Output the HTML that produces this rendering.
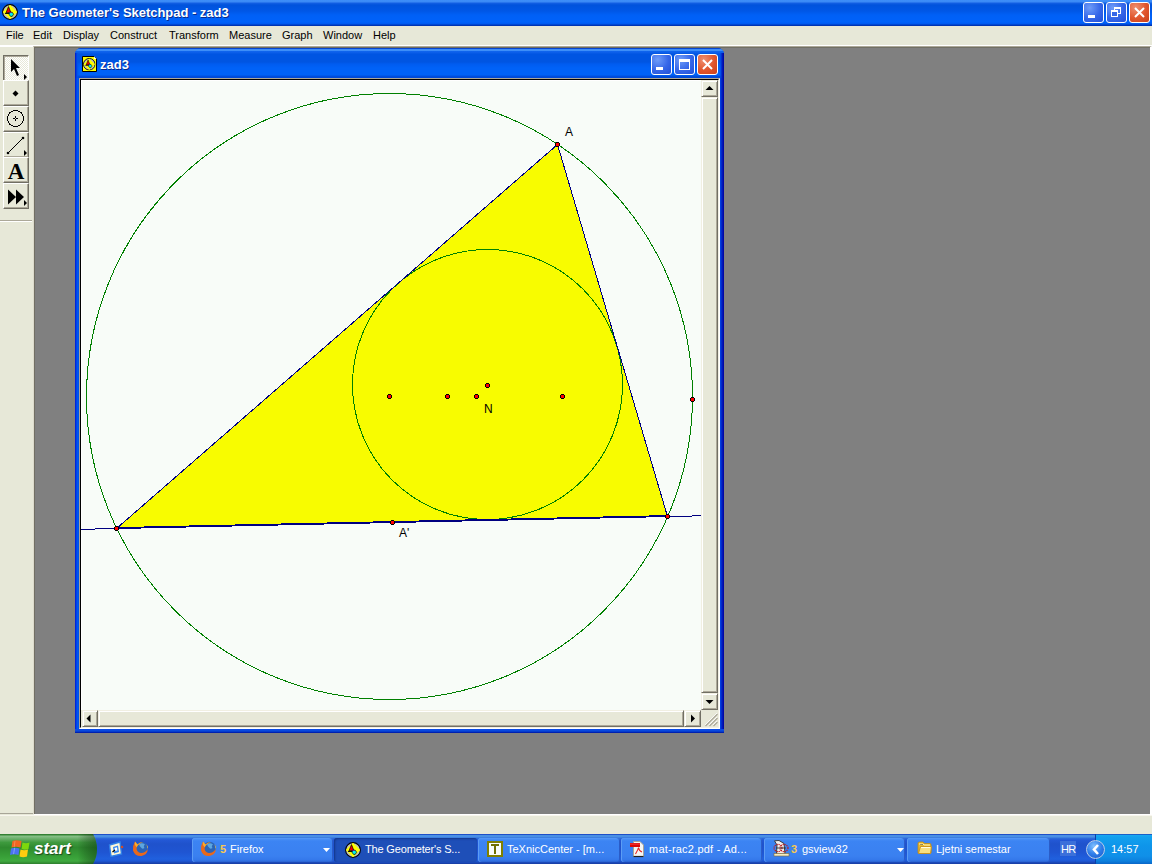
<!DOCTYPE html>
<html><head><meta charset="utf-8">
<style>
*{margin:0;padding:0;box-sizing:border-box}
html,body{width:1152px;height:864px;overflow:hidden;background:#E7E8D8;font-family:"Liberation Sans",sans-serif}
.a{position:absolute}
#title{left:0;top:0;width:1152px;height:26px;background:linear-gradient(#3D8FF8 0px,#3A8AF5 2px,#1460E4 3px,#0053DC 5px,#0057E6 11px,#0060F6 15px,#0062FA 22px,#0058EE 24px,#0038B8 25px,#0030B0 26px)}
#title .t{left:22px;top:5px;color:#fff;font-weight:bold;font-size:13px;line-height:16px;letter-spacing:-0.03px;white-space:nowrap;text-shadow:1px 1px 0 #0A2A8A}
.xb{width:21px;height:21px;border:1px solid #fff;border-radius:3px;background:radial-gradient(circle at 30% 25%,#6E9CF8,#3566E8 55%,#2250D8)}
.xc{background:radial-gradient(circle at 30% 25%,#F09070,#E0552C 55%,#C8401A)}
#menu{left:0;top:26px;width:1152px;height:19px;background:#E7E8D8}
#menu span{position:absolute;top:3px;font-size:11px;line-height:13px;color:#000;white-space:nowrap}
#mdi{left:33px;top:46px;width:1119px;height:769px;background:#808080;border-top:1px solid #ACA899;border-left:1px solid #DCDACC;border-right:2px solid #fff;border-bottom:1px solid #fff}
#mdi .in{position:absolute;left:0;top:0;right:0;bottom:0;border-top:1px solid #716F64;border-left:1px solid #716F64}
#status{left:0;top:815px;width:1152px;height:19px;background:#E7E8D8;border-top:1px solid #F8F6EE}
#panel{left:0;top:46px;width:33px;height:768px;background:#E7E8D8;border-top:1px solid #fff;border-bottom:1px solid #A8A598}
.tb{position:absolute;left:3px;width:26px;height:26px;background:#E7E8D8;border-top:1px solid #fff;border-left:1px solid #fff;border-right:1px solid #716F64;border-bottom:1px solid #716F64;box-shadow:inset -1px -1px 0 #ACA899}
.tb.sel{border-top:1px solid #716F64;border-left:1px solid #716F64;border-right:1px solid #fff;border-bottom:1px solid #fff;box-shadow:inset 1px 1px 0 #ACA899;background:repeating-conic-gradient(#FFFFFF 0 25%,#E7E8D8 0 50%) 0 0/2px 2px}
#child{left:75px;top:48px;width:649px;height:685px;background:#0A48E0;border-radius:6px 6px 0 0}
#ctitle{left:0;top:0;width:649px;height:30px;border-radius:6px 6px 0 0;background:linear-gradient(#0845D0 0px,#0845D0 1px,#3D8EF8 1px,#3D8EF8 3px,#1066EE 3px,#0A5CE8 5px,#0055E2 6px,#0055E2 14px,#005CF0 16px,#0062F8 20px,#0062F8 27px,#0050E0 28px,#0046D4 30px)}
#ctitle .t{left:25px;top:9px;color:#fff;font-weight:bold;font-size:13px;line-height:16px;text-shadow:1px 1px 0 #0A2A8A}
#cframe{left:0;top:30px;width:649px;height:655px;border-bottom:4px solid #0A48E0;background:linear-gradient(90deg,#0018D8 0px,#0030E0 1px,#0058F0 2px,#0050E8 4px,transparent 4px,transparent 645px,#0048E8 645px,#0020C0 647px,#0000A0 649px)}
#client{left:79px;top:78px;width:641px;height:651px;border-top:1px solid #ACA899;border-left:1px solid #ACA899;border-right:1px solid #fff;border-bottom:1px solid #fff;background:#E7E8D8}
#client .in{position:absolute;left:0;top:0;right:0;bottom:0;border-top:1px solid #000;border-left:1px solid #000;border-right:1px solid #F1EFE2;border-bottom:1px solid #F1EFE2}
.sb{position:absolute;background:#E7E8D8;border-top:1px solid #F1EFE2;border-left:1px solid #F1EFE2;border-right:1px solid #716F64;border-bottom:1px solid #716F64;box-shadow:inset 1px 1px 0 #fff,inset -1px -1px 0 #ACA899}
#task{left:0;top:834px;width:1152px;height:30px;background:linear-gradient(#1E50C8 0px,#1E50C8 1px,#4A90E4 1px,#4A90E4 3px,#2E6EDC 4px,#2358D6 6px,#1F52CC 10px,#1F55D2 18px,#2060DE 25px,#1E58D4 27px,#1A44B0 29px,#183CA0 30px)}
.tbtn{top:4px;height:24px;border-radius:3px;background:linear-gradient(#5A9BF8 0px,#4A90F6 1px,#3C84F3 3px,#3A80F0 18px,#3478EA 22px,#2A62D0 24px);box-shadow:inset 1px 0 0 #5C9CF4,inset -1px 0 0 #2A5CC8}
.tbtn.act{background:#1E4FB8;box-shadow:inset 1px 1px 2px #13358A}
.tt{position:absolute;top:5px;font-size:11px;line-height:13px;color:#fff;white-space:nowrap}
.lbl{font-size:12px;line-height:12px;color:#000;position:absolute;white-space:nowrap}
</style></head><body>
<div id="title" class="a">
  <svg class="a" style="left:2px;top:4px" width="16" height="16" viewBox="0 0 16 16">
    <defs><symbol id="gsp" viewBox="0 0 16 16">
      <circle cx="8" cy="8" r="7.4" fill="#BDBDBD" stroke="#000" stroke-width="1.1"/>
      <path d="M8 1.8 L14.2 8 L8 14.2 L1.8 8 Z" fill="#FFFF00" stroke="#FFFF00" stroke-width="1.6" stroke-linejoin="round"/>
      <path d="M6.5 2.6 L9 8.8 H4 Z" fill="#F00000" stroke="#000" stroke-width="0.7" stroke-linejoin="round"/>
      <path d="M3 9.4 H9.8" stroke="#000" stroke-width="1"/>
      <path d="M7.3 8.2 H10.2 L11.6 10.2 L10.2 12.4 H8.6 L7.2 10.6 Z" fill="#00F0F0" stroke="#000" stroke-width="0.7"/>
      <rect x="7.6" y="7.9" width="1.8" height="1" fill="#900090"/>
    </symbol></defs>
    <use href="#gsp" x="0" y="0" width="16" height="16"/>
  </svg>
  <div class="a t">The Geometer's Sketchpad - zad3</div>
  <div class="a xb" style="left:1083px;top:2px"><div class="a" style="left:4px;top:12px;width:7px;height:3px;background:#fff"></div></div>
  <div class="a xb" style="left:1106px;top:2px">
    <div class="a" style="left:7px;top:4px;width:7px;height:7px;border:1px solid #fff;border-top-width:2px"></div>
    <div class="a" style="left:4px;top:7px;width:7px;height:7px;border:1px solid #fff;border-top-width:2px;background:#3566E8"></div>
  </div>
  <div class="a xb xc" style="left:1129px;top:2px">
    <svg class="a" style="left:0;top:0" width="19" height="19"><path d="M5 5 L14 14 M14 5 L5 14" stroke="#fff" stroke-width="2"/></svg>
  </div>
</div>
<div id="menu" class="a">
  <span style="left:6px">File</span>
  <span style="left:33px">Edit</span>
  <span style="left:63px">Display</span>
  <span style="left:110px">Construct</span>
  <span style="left:169px">Transform</span>
  <span style="left:229px">Measure</span>
  <span style="left:282px">Graph</span>
  <span style="left:323px">Window</span>
  <span style="left:373px">Help</span>
</div>
<div class="a" style="left:0;top:45px;width:1152px;height:1px;background:#fff"></div>
<div id="panel" class="a">
  <div class="tb sel" style="top:8px"></div>
  <div class="tb" style="top:33px"></div>
  <div class="tb" style="top:59px"></div>
  <div class="tb" style="top:85px"></div>
  <div class="tb" style="top:110px"></div>
  <div class="tb" style="top:136px"></div>
  <svg class="a" style="left:0;top:0" width="33" height="200">
    <path d="M11 12 L11 25 L14 22 L17 29 L19 28 L16 21 L20 21 Z" fill="#000"/>
    <path d="M24 27 L27 30 L24 33 Z" fill="#000"/>
    <path d="M15.5 43.5 L18.5 46.5 L15.5 49.5 L12.5 46.5 Z" fill="#000"/>
    <circle cx="15.5" cy="71.5" r="8" fill="none" stroke="#000" stroke-width="1" shape-rendering="crispEdges"/>
    <path d="M13 71h2v1h-2z M16 71h2v1h-2z M15 69h1v2h-1z M15 72h1v2h-1z" fill="#000" shape-rendering="crispEdges"/>
    <path d="M8 106 L23 91" stroke="#000" stroke-width="1"/>
    <circle cx="8" cy="106" r="1.3" fill="#000"/><circle cx="23" cy="91" r="1.3" fill="#000"/>
    <path d="M24 103 L27 106 L24 109 Z" fill="#000"/>
    <path d="M8 142.5 L16 150 L8 157.5 Z M16 142.5 L24 150 L16 157.5 Z" fill="#000"/>
    <path d="M24 153 L27 156 L24 159 Z" fill="#000"/>
    <path d="M0 173.5 H32" stroke="#ACA899"/><path d="M0 174.5 H32" stroke="#fff"/>
  </svg>
  <div class="a" style="left:4px;top:113px;width:24px;text-align:center;font-family:'Liberation Serif',serif;font-weight:bold;font-size:23px;line-height:24px">A</div>
</div>
<div id="mdi" class="a"><div class="in"></div></div>
<div id="status" class="a"></div>

<div id="child" class="a">
  <div id="ctitle" class="a">
    <svg class="a" style="left:7px;top:8px" width="16" height="16" viewBox="0 0 16 16">
      <path d="M0.5 0.5 H12 L14.5 3 V15.5 H0.5 Z" fill="#FFFF00" stroke="#000"/>
      <path d="M12 0.5 L14.5 3 H12 Z" fill="#fff"/>
      <use href="#gsp" x="1" y="2" width="12.5" height="12.5"/>
    </svg>
    <div class="a t">zad3</div>
    <div class="a xb" style="left:576px;top:6px"><div class="a" style="left:4px;top:12px;width:7px;height:3px;background:#fff"></div></div>
    <div class="a xb" style="left:599px;top:6px"><div class="a" style="left:4px;top:4px;width:11px;height:11px;border:1px solid #fff;border-top-width:3px"></div></div>
    <div class="a xb xc" style="left:622px;top:6px">
      <svg class="a" style="left:0;top:0" width="19" height="19"><path d="M5 5 L14 14 M14 5 L5 14" stroke="#fff" stroke-width="2"/></svg>
    </div>
  </div>
  <div id="cframe" class="a"></div>
  <div class="a" style="left:0;top:5px;width:4px;height:25px;background:linear-gradient(90deg,#0014C8 0px,#0030D8 1px,#0050E8 2px,transparent 4px)"></div>
  <div class="a" style="left:645px;top:5px;width:4px;height:25px;background:linear-gradient(90deg,transparent 0px,#0040E0 1px,#0020C0 2px,#0000A0 4px)"></div>
  <div class="a" style="left:0;top:681px;width:649px;height:4px;background:linear-gradient(#0A4CE8,#0848DC 50%,#0030C0 75%,#0010A0)"></div>
</div>
<div id="client" class="a"><div class="in"></div></div>

<svg class="a" style="left:0;top:0" width="1152" height="864">
  <rect x="81" y="80" width="620" height="630" fill="#F8FCF8"/>
  <line x1="81" y1="80.5" x2="701" y2="80.5" stroke="#fff"/>
  <line x1="81.5" y1="80" x2="81.5" y2="710" stroke="#fff"/>
  <clipPath id="cv"><rect x="81" y="80" width="620" height="630"/></clipPath>
  <g clip-path="url(#cv)">
    <polygon points="557.5,144.5 116.5,528.5 667.5,516.5" fill="#F8FC00" shape-rendering="crispEdges"/>
    <circle cx="389.5" cy="396.5" r="303" fill="none" stroke="#008000" stroke-width="1" shape-rendering="crispEdges"/>
    <circle cx="487.5" cy="384.5" r="135" fill="none" stroke="#008000" stroke-width="1" shape-rendering="crispEdges"/>
    <line x1="81" y1="529.3" x2="701" y2="515.8" stroke="#000080" stroke-width="1" shape-rendering="crispEdges"/>
    <line x1="116.5" y1="527.6" x2="667.5" y2="515.6" stroke="#000080" stroke-width="1" shape-rendering="crispEdges"/>
    <line x1="557.5" y1="144.5" x2="116.5" y2="528.5" stroke="#000080" stroke-width="1" shape-rendering="crispEdges"/>
    <line x1="557.5" y1="144.5" x2="667.5" y2="516.5" stroke="#000080" stroke-width="1" shape-rendering="crispEdges"/>
    <path d="M556 142h3v1h-3z M556 146h3v1h-3z M555 143h1v3h-1z M559 143h1v3h-1z M115 526h3v1h-3z M115 530h3v1h-3z M114 527h1v3h-1z M118 527h1v3h-1z M666 514h3v1h-3z M666 518h3v1h-3z M665 515h1v3h-1z M669 515h1v3h-1z M388 394h3v1h-3z M388 398h3v1h-3z M387 395h1v3h-1z M391 395h1v3h-1z M446 394h3v1h-3z M446 398h3v1h-3z M445 395h1v3h-1z M449 395h1v3h-1z M475 394h3v1h-3z M475 398h3v1h-3z M474 395h1v3h-1z M478 395h1v3h-1z M486 383h3v1h-3z M486 387h3v1h-3z M485 384h1v3h-1z M489 384h1v3h-1z M561 394h3v1h-3z M561 398h3v1h-3z M560 395h1v3h-1z M564 395h1v3h-1z M691 397h3v1h-3z M691 401h3v1h-3z M690 398h1v3h-1z M694 398h1v3h-1z M391 520h3v1h-3z M391 524h3v1h-3z M390 521h1v3h-1z M394 521h1v3h-1z" fill="#000" shape-rendering="crispEdges"/>
    <path d="M556 143h3v3h-3z M115 527h3v3h-3z M666 515h3v3h-3z M388 395h3v3h-3z M446 395h3v3h-3z M475 395h3v3h-3z M486 384h3v3h-3z M561 395h3v3h-3z M691 398h3v3h-3z M391 521h3v3h-3z" fill="#FF0000" shape-rendering="crispEdges"/>
  </g>
  <!-- vertical scrollbar -->
</svg>
<div class="sb" style="left:701px;top:80px;width:17px;height:17px"></div>
<div class="sb" style="left:701px;top:97px;width:17px;height:596px"></div>
<div class="sb" style="left:701px;top:693px;width:17px;height:17px"></div>
<div class="sb" style="left:82px;top:710px;width:16px;height:17px"></div>
<div class="sb" style="left:98px;top:710px;width:586px;height:17px"></div>
<div class="sb" style="left:684px;top:710px;width:17px;height:17px"></div>
<div class="a" style="left:701px;top:710px;width:17px;height:17px;background:#E7E8D8"></div>
<svg class="a" style="left:0;top:0" width="1152" height="864">
  <path d="M705.5 90 L709.5 86 L713.5 90 Z" fill="#000"/>
  <path d="M705.5 700 L709.5 704 L713.5 700 Z" fill="#000"/>
  <path d="M90.5 714.5 L86.5 718.5 L90.5 722.5 Z" fill="#000"/>
  <path d="M691 714.5 L695 718.5 L691 722.5 Z" fill="#000"/>
  <path d="M717 713 L705 725 M717 717 L709 725 M717 721 L713 725" stroke="#fff" stroke-width="1"/>
  <path d="M717.5 714 L705.5 726 M717.5 718 L709.5 726 M717.5 722 L713.5 726" stroke="#ACA899" stroke-width="1.2"/>
</svg>
<div class="lbl" style="left:565px;top:126px">A</div>
<div class="lbl" style="left:484px;top:403px">N</div>
<div class="lbl" style="left:399px;top:527px">A'</div>

<div id="task" class="a">
  <svg class="a" style="left:0;top:0" width="100" height="30">
    <defs>
      <linearGradient id="sg" x1="0" y1="0" x2="0" y2="1">
        <stop offset="0" stop-color="#2A722A"/><stop offset="0.035" stop-color="#3F8F3F"/><stop offset="0.07" stop-color="#88C088"/><stop offset="0.14" stop-color="#70B270"/><stop offset="0.28" stop-color="#3E9A3E"/><stop offset="0.45" stop-color="#2F8A2F"/><stop offset="0.75" stop-color="#38A038"/><stop offset="0.9" stop-color="#40AA40"/><stop offset="1" stop-color="#2E7E2E"/>
      </linearGradient>
      <linearGradient id="sh" x1="0" y1="0" x2="1" y2="0">
        <stop offset="0" stop-color="#000" stop-opacity="0"/><stop offset="0.8" stop-color="#000" stop-opacity="0"/><stop offset="1" stop-color="#0A300A" stop-opacity="0.45"/>
      </linearGradient>
    </defs>
    <path d="M0 0 H93 A30 30 0 0 1 93 30 H0 Z" fill="url(#sg)"/>
    <path d="M0 0 H93 A30 30 0 0 1 93 30 H0 Z" fill="url(#sh)"/>
  </svg>
  <svg class="a" style="left:0;top:0" width="34" height="30">
    <path d="M12.5 7 Q16 5.5 21.5 7 L20.5 13.5 Q16 12 11.5 13.5 Z" fill="#F26522"/>
    <path d="M14.5 7.2 L15.5 7 L14.6 13 L13.8 13.1 Z" fill="#F8A070" opacity="0.7"/>
    <path d="M22.5 8.5 Q26 10 29.5 8.5 L28.5 15 Q25 16.5 21.5 15 Z" fill="#7DD80C"/>
    <path d="M11 14.5 Q15 13 19.5 14.5 L18.5 21 Q14 19.5 10 21 Z" fill="#4A72F0"/>
    <path d="M14 14 L15 13.8 L14 20 L13.2 20.2 Z" fill="#A8C0FF" opacity="0.7"/>
    <path d="M20.5 15.5 Q24 17 28 15.5 L27 22.5 Q23 24 19.5 22.5 Z" fill="#FFCC10"/>
  </svg>
  <div class="a" style="left:34px;top:6px;color:#fff;font-weight:bold;font-style:italic;font-size:17px;line-height:18px;text-shadow:1px 1px 1px #1C4A1C">start</div>
  <svg class="a" style="left:108px;top:7px" width="16" height="16" viewBox="0 0 16 16">
    <path d="M1.5 4 L12 1 L13.5 13 L3 15.5 Z" fill="#FFF8D8" stroke="#2F7FE8" stroke-width="1.4"/>
    <path d="M5 6 L10 4.5 L11 11 L6 12.5 Z" fill="#3A8AF0"/>
    <path d="M6.5 7 L9 6.3 L9.4 9.5 L7 10 Z" fill="#fff"/>
    <path d="M4.5 11 L7 9" stroke="#000" stroke-width="1.2"/>
    <path d="M14 4.5 L15.5 6 L14 7.5 L12.5 6 Z" fill="#E84A10"/>
  </svg>
  <svg class="a" style="left:132px;top:6px" width="17" height="17" viewBox="0 0 17 17">
    <circle cx="9.5" cy="8" r="6.3" fill="#2A64B8"/>
    <path d="M7 4 Q10 2.5 13 4.5 Q11 6 12.5 8 Q10 9.5 9 7.5 Q7.5 6.5 7 4 Z" fill="#5CA6E0"/>
    <path d="M3 1.5 L5.5 4.5 Q8 2.2 11 2.3 Q6 3.5 4.6 7.5 Q4.2 11.8 8.5 13 Q12.8 13.5 15.8 9 Q15.5 14.8 9.5 16 Q3 16.5 1 10.5 Q0.3 6 3 1.5 Z" fill="#E9681C"/>
    <path d="M3 1.5 L5.5 4.5 Q8 2.2 11 2.3 Q6 3.5 4.6 7.5 Q4 6 3 5 Q2.5 3.5 3 1.5 Z" fill="#F6AE2E"/>
    <path d="M14.5 4 Q16.2 6.5 15.8 9 Q15 7 14.5 4 Z" fill="#F4C040"/>
  </svg>
  <div class="a tbtn" style="left:192px;width:141px">
    <svg class="a" style="left:8px;top:2px" width="17" height="17" viewBox="0 0 17 17">
      <circle cx="9.5" cy="8" r="6.3" fill="#2A64B8"/>
    <path d="M7 4 Q10 2.5 13 4.5 Q11 6 12.5 8 Q10 9.5 9 7.5 Q7.5 6.5 7 4 Z" fill="#5CA6E0"/>
    <path d="M3 1.5 L5.5 4.5 Q8 2.2 11 2.3 Q6 3.5 4.6 7.5 Q4.2 11.8 8.5 13 Q12.8 13.5 15.8 9 Q15.5 14.8 9.5 16 Q3 16.5 1 10.5 Q0.3 6 3 1.5 Z" fill="#E9681C"/>
    <path d="M3 1.5 L5.5 4.5 Q8 2.2 11 2.3 Q6 3.5 4.6 7.5 Q4 6 3 5 Q2.5 3.5 3 1.5 Z" fill="#F6AE2E"/>
    <path d="M14.5 4 Q16.2 6.5 15.8 9 Q15 7 14.5 4 Z" fill="#F4C040"/>
    </svg>
    <span class="tt" style="left:28px;color:#F8C850;font-weight:bold">5</span>
    <span class="tt" style="left:38px">Firefox</span>
    <svg class="a" style="left:131px;top:10px" width="7" height="5"><path d="M0 0 H7 L3.5 4 Z" fill="#fff"/></svg>
  </div>
  <div class="a tbtn act" style="left:334px;width:143px">
    <svg class="a" style="left:11px;top:4px" width="16" height="16"><use href="#gsp" x="0" y="0" width="16" height="16"/></svg>
    <span class="tt" style="left:31px;letter-spacing:-0.16px">The Geometer's S...</span>
  </div>
  <div class="a tbtn" style="left:478px;width:142px">
    <svg class="a" style="left:9px;top:3px" width="16" height="16"><rect x="0" y="0" width="16" height="16" fill="#808000"/><rect x="2" y="2" width="12" height="12" fill="#F8FCF8"/><path d="M4 3 H12 V5 H9 V13 H7 V5 H4 Z" fill="#707000"/></svg>
    <span class="tt" style="left:29px">TeXnicCenter - [m...</span>
  </div>
  <div class="a tbtn" style="left:621px;width:141px">
    <svg class="a" style="left:9px;top:3px" width="17" height="17"><path d="M3.5 0.5 H10 L13.5 4 V15.5 H3.5 Z" fill="#F4F6F4" stroke="#A8A498"/><path d="M3.5 15.5 H13.5" stroke="#202020" stroke-width="1.2"/><rect x="0" y="2" width="10" height="4" fill="#D80808"/><rect x="0" y="2.5" width="10" height="1.3" fill="#F03030"/><path d="M5.5 13 Q8 9 8.5 6.5 Q9 10 12 11" stroke="#E82020" fill="none" stroke-width="1.1"/></svg>
    <span class="tt" style="left:28px;letter-spacing:0.22px">mat-rac2.pdf - Ad...</span>
  </div>
  <div class="a tbtn" style="left:764px;width:141px">
    <svg class="a" style="left:9px;top:2px" width="17" height="17"><path d="M1.5 0.8 L6 0.5 L11 3.5 L12 14 H3.5 L4 5 Z" fill="#F0F0F0" stroke="#303030" stroke-width="0.9"/><ellipse cx="5" cy="8" rx="4" ry="3.6" fill="none" stroke="#C01818" stroke-width="1.2" stroke-dasharray="1.2 0.8"/><ellipse cx="11" cy="8" rx="4" ry="3.6" fill="none" stroke="#C01818" stroke-width="1.2" stroke-dasharray="1.2 0.8"/><path d="M3 8 H13" stroke="#303030" stroke-width="0.9"/><rect x="1" y="13.5" width="15" height="2.5" fill="#F4ECC0" stroke="#806838" stroke-width="0.6"/></svg>
    <span class="tt" style="left:27px;color:#F8C850;font-weight:bold">3</span>
    <span class="tt" style="left:38px">gsview32</span>
    <svg class="a" style="left:133px;top:10px" width="7" height="5"><path d="M0 0 H7 L3.5 4 Z" fill="#fff"/></svg>
  </div>
  <div class="a tbtn" style="left:907px;width:143px">
    <svg class="a" style="left:10px;top:3px" width="17" height="15"><path d="M1 2.5 Q1 1 2.5 1 H6 L7.5 2.5 H13 Q14 2.5 14 4 V12 H1 Z" fill="#E8B830" stroke="#C08A10" stroke-width="0.8"/><path d="M2 3 H6 L7 4 H13" stroke="#FFF4B0" stroke-width="1"/><path d="M3.5 5.5 H14.5 L13.5 12.5 H1.5 Z" fill="#F8E080" stroke="#C89018" stroke-width="0.9"/><path d="M4 6.5 H13" stroke="#FFFBE0" stroke-width="1"/></svg>
    <span class="tt" style="left:29px">Ljetni semestar</span>
  </div>
  <div class="a" style="left:1060px;top:7px;width:16px;height:15px;background:#3B70DA"></div>
  <span class="a tt" style="left:1061px;top:9px;letter-spacing:-0.6px">HR</span>
  <div class="a" style="left:1095px;top:0;width:57px;height:30px;border-left:1px solid #0B3FA8;background:linear-gradient(#1860C8 0px,#1860C8 1px,#18AAF2 1px,#12A0EE 3px,#0E95EA 12px,#1090E8 22px,#0D80DD 27px,#0A66C8 30px)"></div>
  <div class="a" style="left:1086px;top:6px;width:19px;height:19px;border-radius:50%;border:1px solid #B8CCE8;background:radial-gradient(circle at 40% 30%,#80C0FF,#2F7EEA 50%,#1A58C8)"></div>
  <svg class="a" style="left:1091px;top:10px" width="10" height="11"><path d="M7 1 L3 5.5 L7 10" stroke="#fff" stroke-width="2.6" fill="none"/></svg>
  <span class="a tt" style="left:1111px;top:9px">14:57</span>
</div>
</body></html>
